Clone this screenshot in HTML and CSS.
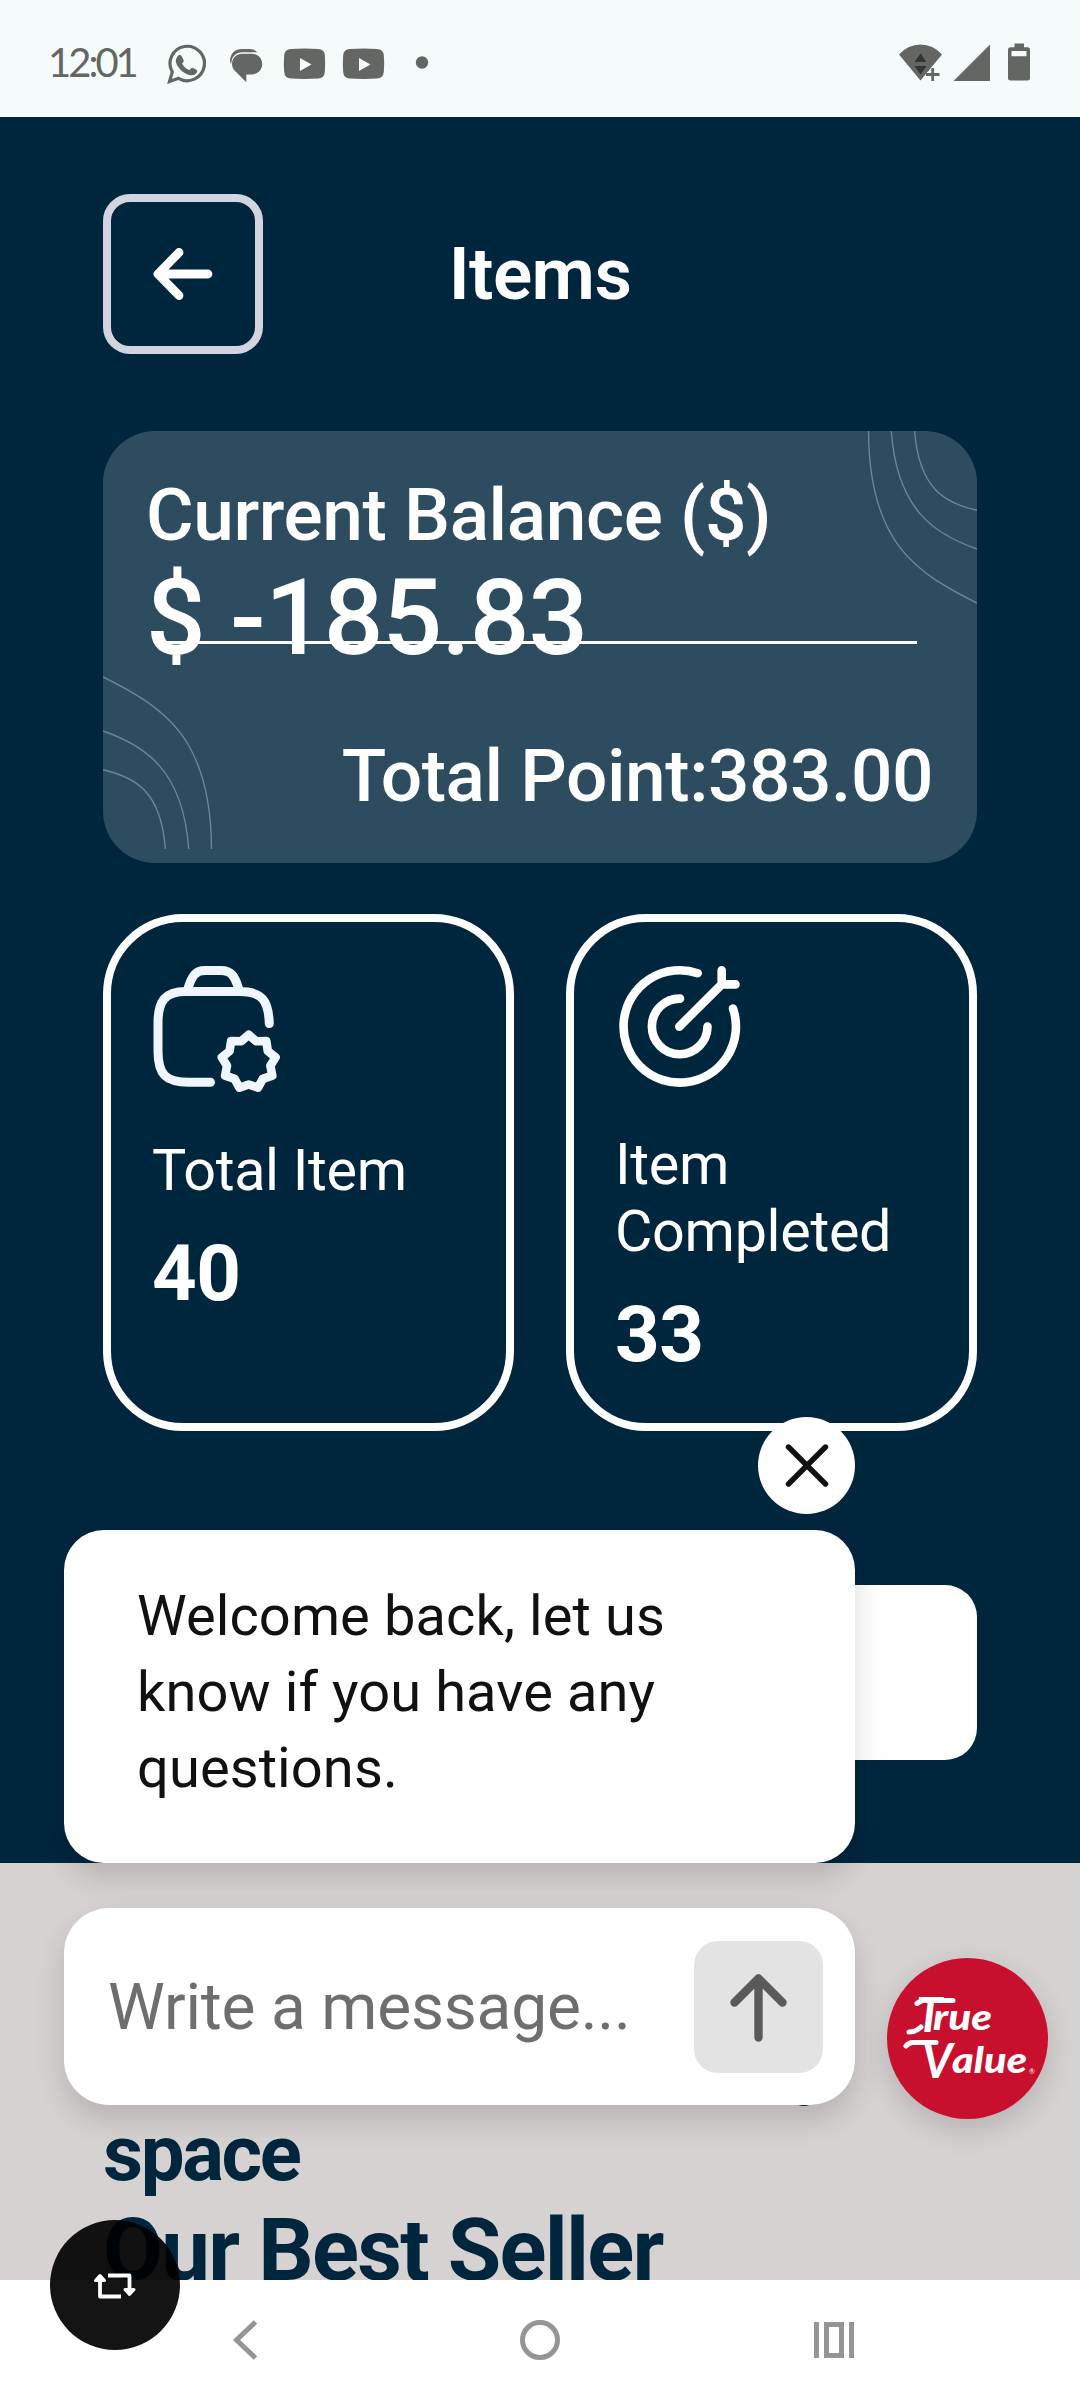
FILE: index.html
```html
<!DOCTYPE html>
<html lang="en">
<head>
<meta charset="utf-8">
<title>Items</title>
<link rel="stylesheet" href="styles.css">
</head>
<body>
<div class="screen">
  <header class="statusbar">
    <span class="clock">12:01</span>
    <svg class="notifications" width="280" height="44" viewBox="160 40 280 44" fill="#646664">
      <path d="M169.5 81.500 L172.300 72 A17.200 17.200 0 1 1 178.500 78.300 Z" fill="none" stroke="#646664" stroke-width="3.200"/>
      <path d="M177.500 56.500c1.200-1.800 3.200-2 4.200-.3l2 4c.6 1.300-1.300 2.600-1.600 3.500 1.600 3 4 5 7.200 6.400 1-.3 2-2.600 3.200-2.300l4.300 2.200c1.200.8-.2 3.200-1.500 4.200-3 2.200-7.600.7-11.400-1.800-3.700-2.500-7.700-7-8-11-.1-2 .5-3.700 1.600-4.900z"/>
      <path d="M230 61.500c0-7.500 4.500-12.500 11.500-12.500h8c3.500 0 6 1.300 7.700 3.300h-14.500c-7 0-11.200 4.500-11.500 11.700-.7-.7-1.200-1.600-1.200-2.500z"/>
      <path d="M242.500 53.800h9c6.500 0 10.700 4.700 10.700 10.200s-4.200 10.400-10.700 10.400h-5.200v7.800l-11-11c-2-2-3.300-4.300-3.300-7.200 0-5.500 4.200-10.200 10.500-10.200z"/>
      <path d="M291 49q13.500-.8 27 0 6.500.4 6.800 6 .8 7.500 0 17-.4 6-6.800 6.500-13.500.8-27 0-6.500-.5-6.800-6.500-.8-8.500 0-17 .3-5.600 6.800-6zM300 58v13l11.500-6.500z" fill-rule="evenodd"/>
      <path d="M350 49q13.500-.8 27 0 6.500.4 6.800 6 .8 7.500 0 17-.4 6-6.800 6.500-13.500.8-27 0-6.500-.5-6.800-6.500-.8-8.500 0-17 .3-5.600 6.800-6zM359 58v13l11.500-6.500z" fill-rule="evenodd"/>
      <circle cx="422" cy="62.500" r="6.200"/>
    </svg>
    <svg class="system" width="134" height="44" viewBox="897 40 134 44" fill="#646664">
      <path d="M899 54.500Q908 44.500 920.500 44.500T942 54.500L920.500 80.500z"/>
      <path d="M914.500 62l6-8.500 6 8.500zM914.500 66h12l-6 8.500z" fill="#323432"/>
      <path d="M926 74.500h13.500M932.700 68v13" stroke="#646664" stroke-width="2.800"/>
      <path d="M953.500 81L990 44.500V81z"/>
      <path d="M1014.500 43.500h9.500v3.700h3.500q2.500 0 2.500 2.500V78q0 2.500-2.500 2.500h-17Q1008 80.500 1008 78V49.700q0-2.500 2.500-2.500h4zM1011.500 51v5.300h15V51z" fill-rule="evenodd"/>
    </svg>
  </header>

  <main class="hero">
    <div class="topbar">
      <button class="back" aria-label="Back">
        <svg width="62" height="54" viewBox="0 0 62 54" fill="none" stroke="#fff" stroke-width="8.800" stroke-linecap="round" stroke-linejoin="round"><path d="M27 5.500L6 27l21 21.500M6 27H56"/></svg>
      </button>
      <h1 class="title">Items</h1>
    </div>

    <section class="balance">
      <svg class="waves" viewBox="0 0 874 432" width="874" height="432" fill="none" stroke="#fff" stroke-opacity=".32" stroke-width="1.400">
        <defs>
          <g id="wave">
            <path d="M0 246C60 276 108 305 108.500 418"/>
            <path d="M0 300C40 314 80 337 85.700 418"/>
            <path d="M0 338.700C32 346 58 360 62.400 418"/>
          </g>
        </defs>
        <use href="#wave"/>
        <use href="#wave" transform="rotate(180 437 209)"/>
      </svg>
      <div class="rule"></div>
      <p class="balance-label">Current Balance ($)</p>
      <p class="balance-value">$ -185.83</p>
      <p class="points">Total Point:383.00</p>
    </section>

    <section class="stats">
      <article class="stat">
        <svg class="stat-icon" width="133" height="133" viewBox="-1 0 133 133" fill="none" stroke="#eff6ff" stroke-width="9" stroke-linecap="round" stroke-linejoin="round">
          <path d="M116.300 58.600C115.500 35 109 26.600 86 26.600H33C12 26.600 5 36 5 58V86C5 110 13 117.200 36 117.200H57.500"/>
          <path d="M35 23.500C39 10 43 5.600 52 5.600H68C78 5.600 82 11 85.500 23.500"/>
          <path stroke-width="8.600" d="M95.700 69.700L103.200 76.300L113.300 76.100L114.800 86L122.600 92.300L117.400 100.800L119.300 110.700L109.800 113.900L105 122.700L95.700 119.500L86.400 122.700L81.600 113.900L72.100 110.700L74 100.800L68.800 92.300L76.600 86L78.100 76.100L88.200 76.300Z"/>
        </svg>
        <p class="stat-label">Total Item</p>
        <p class="stat-value">40</p>
      </article>
      <article class="stat">
        <svg class="stat-icon" width="127" height="127" viewBox="-1 0 127 127" fill="none" stroke="#fff" stroke-width="8.600" stroke-linecap="round" stroke-linejoin="round">
          <path d="M81.700 8.200A56.200 56.200 0 1 0 117 43.500"/>
          <path d="M64 33.600A27.800 27.800 0 1 0 91.500 61.500"/>
          <path d="M63.300 61.600L105.700 19.400V5.300M105.700 19.400H119.500"/>
        </svg>
        <p class="stat-label">Item Completed</p>
        <p class="stat-value">33</p>
      </article>
    </section>

    <div class="panel"></div>
  </main>

  <section class="promo">
    <p class="tagline">Design textiles for any<br>space</p>
    <h2 class="promo-title">Our Best Seller</h2>
  </section>

  <nav class="navbar">
    <svg width="34" height="40" viewBox="0 0 34 40" fill="none" stroke="#959595" stroke-width="5"><path d="M23.500 2L4.500 20l19 18"/></svg>
    <svg width="40" height="40" viewBox="0 0 40 40" fill="none" stroke="#959595" stroke-width="5"><circle cx="20" cy="20" r="17.500"/></svg>
    <svg width="40" height="36" viewBox="0 0 40 36" fill="none" stroke="#959595" stroke-width="5"><path d="M2.500 0v36M37.500 0v36M12.500 2.500h15v31h-15z"/></svg>
  </nav>

  <aside class="chat">
    <button class="chat-close" aria-label="Close">
      <svg width="44" height="44" viewBox="0 0 44 44" fill="none" stroke="#111" stroke-width="5.400" stroke-linecap="round"><path d="M3.500 3l37 37M40.500 3l-37 37"/></svg>
    </button>
    <div class="bubble">Welcome back, let us<br>know if you have any<br>questions.</div>
    <div class="composer">
      <span class="placeholder">Write a message...</span>
      <button class="send" aria-label="Send">
        <svg width="58" height="70" viewBox="0 0 58 70" fill="none" stroke="#5a5a5a" stroke-width="8.400" stroke-linecap="round" stroke-linejoin="round"><path d="M28.500 65.500V6.500M4.500 30.500l24-24 24 24"/></svg>
      </button>
    </div>
  </aside>

  <button class="launcher" aria-label="True Value chat">
    <svg width="161" height="161" viewBox="0 0 161 161" fill="#fff" stroke="#fff" stroke-linecap="round" stroke-linejoin="round">
      <path d="M30 45.500l5-3H66M22 74q7 0 12-5" fill="none" stroke-width="5"/>
      <path d="M19 88q3-4 8-3.500H49" fill="none" stroke-width="5"/>
      <text class="brand" y="74"><tspan class="cap" x="29">T</tspan><tspan x="46" y="72" textLength="59" lengthAdjust="spacingAndGlyphs">rue</tspan></text>
      <text class="brand" y="120"><tspan class="cap" x="35">V</tspan><tspan x="65" y="115" textLength="75" lengthAdjust="spacingAndGlyphs">alue</tspan></text>
      <text class="mark" x="142" y="116">®</text>
    </svg>
  </button>

  <button class="switcher" aria-label="Switch view">
    <svg width="44" height="28" viewBox="0 0 44 28" fill="none" stroke="#fff" stroke-width="3.800" stroke-linejoin="round">
      <path d="M7 6V25.500H28M15 4.500H36.500V20"/>
      <path d="M2.500 9.500L7 4.500l4.500 5zM32 18.500l4.500 5 4.500-5z" fill="#fff" stroke-width="3"/>
    </svg>
  </button>
</div>
</body>
</html>
```
FILE: styles.css
```css
* { box-sizing: border-box; }

body {
  margin: 0;
  font-family: Roboto, "Liberation Sans", sans-serif;
}

p, h1, h2 { margin: 0; }

button {
  padding: 0;
  border: 0;
  display: flex;
  align-items: center;
  justify-content: center;
}

.screen {
  position: relative;
  width: 1080px;
  height: 2400px;
  overflow: hidden;
  display: flex;
  flex-direction: column;
}

/* Status bar */
.statusbar {
  height: 117px;
  padding: 7px 49px 0 48px;
  display: flex;
  align-items: center;
  background: #f5fbfb;
  color: #646664;
}
.clock {
  width: 112px;
  font-family: Lato, sans-serif;
  font-size: 40px;
  letter-spacing: -3px;
}
.system { margin-left: auto; }

/* Dark page area */
.hero {
  height: 1746px;
  padding: 77px 103px 0;
  background: #00263e;
  color: #fff;
}
.topbar {
  display: grid;
  grid-template-columns: 160px 1fr 160px;
  align-items: center;
}
.back {
  width: 160px;
  height: 160px;
  border: 8px solid #d2d5df;
  border-radius: 27px;
  background: none;
}
.title {
  text-align: center;
  font-size: 73px;
  font-weight: 600;
  letter-spacing: -.6px;
}

.balance {
  position: relative;
  height: 432px;
  margin-top: 77px;
  padding: 42px 44px 0 43px;
  border-radius: 52px;
  overflow: hidden;
  background: #2d4c60;
  font-weight: 500;
}
.waves { position: absolute; left: 0; top: 0; }
.rule {
  position: absolute;
  left: 60px;
  right: 60px;
  top: 210px;
  height: 3px;
  background: #fff;
}
.balance-label { font-size: 73px; line-height: 84px; letter-spacing: -.42px; }
.balance-value { font-size: 105px; line-height: 123px; letter-spacing: -.85px; }
.points { margin-top: 53px; font-size: 73px; letter-spacing: -.45px; text-align: right; }

.stats {
  display: grid;
  grid-template-columns: 1fr 1fr;
  gap: 52px;
  height: 517px;
  margin-top: 51px;
}
.stat {
  padding: 43px 41px 0;
  border: 8px solid #fff;
  border-radius: 80px;
}
.stat-icon { display: block; margin-bottom: 39px; }
.stat-label { font-size: 57.5px; letter-spacing: -.33px; }
.stat-value { margin-top: 24px; font-size: 78px; font-weight: 700; letter-spacing: -.4px; }

.panel {
  height: 175px;
  margin-top: 154px;
  border-radius: 32px;
  background: #fff;
}

/* Promo */
.promo {
  height: 417px;
  padding: 154px 0 0 103px;
  overflow: hidden;
  white-space: nowrap;
  background: #d6d2d1;
  color: #00263e;
}
.tagline { font-size: 78px; font-weight: 700; letter-spacing: -2.4px; }
.promo-title { font-size: 87px; font-weight: 700; letter-spacing: -1.75px; }

/* System navigation */
.navbar {
  height: 120px;
  padding: 0 226px 0 232px;
  display: flex;
  align-items: center;
  justify-content: space-between;
  background: #fff;
}

/* Chat overlay */
.chat {
  position: absolute;
  left: 64px;
  top: 1417px;
  width: 791px;
}
.chat-close {
  width: 97px;
  height: 97px;
  margin-left: auto;
  border-radius: 50%;
  background: #fff;
}
.bubble {
  height: 333px;
  margin-top: 16px;
  padding: 48px 73px;
  border-radius: 40px;
  background: #fff;
  color: #111;
  font-size: 56px;
  line-height: 76px;
  letter-spacing: .1px;
  box-shadow: 0 15px 30px rgba(0, 0, 0, .15);
}
.composer {
  height: 197px;
  margin-top: 45px;
  padding: 0 32px 0 44px;
  display: flex;
  align-items: center;
  justify-content: space-between;
  border-radius: 45px;
  background: #fff;
  box-shadow: 0 15px 30px rgba(0, 0, 0, .15);
}
.placeholder { padding-top: 2px; color: #6e6e6e; font-size: 64px; letter-spacing: -.2px; }
.send {
  width: 129px;
  height: 132px;
  border-radius: 24px;
  background: #e3e3e3;
}

.launcher {
  position: absolute;
  left: 887px;
  top: 1958px;
  width: 161px;
  height: 161px;
  border-radius: 50%;
  background: #c8102e;
  box-shadow: 0 10px 30px rgba(0, 0, 0, .16);
}
.brand {
  font: italic 900 36px Lato, sans-serif;
  stroke: none;
}
.brand .cap { font-size: 47px; font-weight: 700; }
.mark { font: 7px Lato, sans-serif; stroke: none; }

.switcher {
  position: absolute;
  left: 50px;
  top: 2220px;
  width: 130px;
  height: 130px;
  border-radius: 50%;
  background: rgba(0, 0, 0, .92);
}
```
